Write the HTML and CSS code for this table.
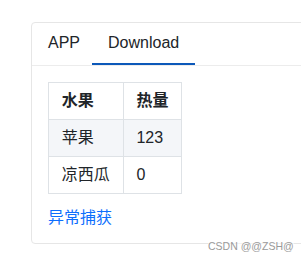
FILE: index.html
```html
<!DOCTYPE html>
<html>
<head>
<meta charset="utf-8">
<link rel="stylesheet" href="styles.css">
</head>
<body>
<div class="page">
  <div class="card">
    <div class="tabs">
      <a class="tab tab-first">APP</a>
      <a class="tab active">Download</a>
    </div>
    <div class="content">
      <table class="grid">
        <thead>
          <tr><th>水果</th><th>热量</th></tr>
        </thead>
        <tbody>
          <tr class="stripe"><td>苹果</td><td>123</td></tr>
          <tr><td>凉西瓜</td><td>0</td></tr>
        </tbody>
      </table>
      <a class="link">异常捕获</a>
    </div>
  </div>
</div>
<div class="watermark">CSDN @@ZSH@</div>
</body>
</html>
```

FILE: styles.css
```css
html, body {
  margin: 0;
  padding: 0;
  background: #fff;
}
body {
  font-family: "Liberation Sans", "Noto Sans CJK SC", sans-serif;
  font-size: 16px;
  line-height: 24px;
  color: #212529;
  position: relative;
  width: 301px;
  height: 260px;
  overflow: hidden;
}
.page {
  padding: 22px 0 0 31px;
}
.card {
  width: 300px;
  height: 222px;
  border: 1px solid #e6e6e6;
  border-radius: 4px;
  box-sizing: border-box;
}
.tabs {
  display: flex;
  border-bottom: 1px solid #ececec;
}
.tab {
  display: block;
  padding: 8px 16px;
  border-bottom: 2px solid transparent;
  color: #212529;
}
.tab-first {
  padding-right: 12px;
}
.tab.active {
  border-bottom-color: #0c58b9;
}
.content {
  padding: 16px 16px 0 16px;
}
.grid {
  border-collapse: collapse;
}
.grid th, .grid td {
  border: 1px solid #dee2e6;
  padding: 6px 12.8px;
  text-align: left;
  height: 24px;
  white-space: nowrap;
}
.grid th {
  font-weight: bold;
}
.stripe td {
  background: #f4f6f9;
}
.link {
  display: block;
  margin-top: 12px;
  color: #0d6efd;
}
.watermark {
  position: absolute;
  left: 208px;
  top: 240px;
  font-size: 10.5px;
  line-height: 12px;
  white-space: nowrap;
  color: #9a9a9a;
  background: rgba(255,255,255,0.5);
}
```
